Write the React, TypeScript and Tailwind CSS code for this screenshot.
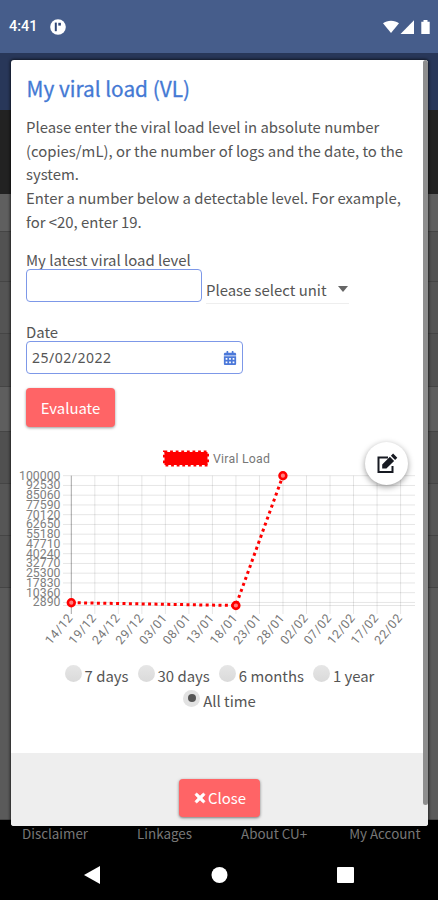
import { FaCalendarAlt, FaTimes } from "react-icons/fa";

const rows = [
  "h-[38px] bg-[#5f5f5f]",
  "h-[50px] bg-[#525252]",
  "h-[52px] bg-[#545454]",
  "h-[53px] bg-[#515151]",
  "h-[45px] bg-[#5e5e5e]",
  "h-[52px] bg-[#505050]",
  "h-[52px] bg-[#565656]",
  "h-[52px] bg-[#535353]",
  "h-[232px] bg-[#5a5a5a]",
];

const intro = [
  "Please enter the viral load level in absolute number",
  "(copies/mL), or the number of logs and the date, to the",
  "system.",
  "Enter a number below a detectable level. For example,",
  "for <20, enter 19.",
];

const ranges = ["7 days", "30 days", "6 months", "1 year"];

const levels = [
  100000, 92530, 85060, 77590, 70120, 62650, 55180, 47710, 40240, 32770, 25300,
  17830, 10360, 2890,
];

const dates = [
  "14/12", "19/12", "24/12", "29/12", "03/01", "08/01", "13/01", "18/01",
  "23/01", "28/01", "02/02", "07/02", "12/02", "17/02", "22/02",
];

const points = [
  [60.3, 162.7],
  [224.9, 165.5],
  [271.9, 35.7],
];

const Chart = () => (
  <svg
    width="411"
    height="212"
    viewBox="0 0 411 212"
    className="block font-[Roboto,sans-serif]"
  >
    <rect x="153.500" y="12" width="43" height="13" fill="#ff0000" stroke="#ff0000" strokeWidth="3" strokeDasharray="2.8 2.8" />
    <text x="202" y="22.5" fontSize="12.3" fill="#777" textLength="57">
      Viral Load
    </text>

    {levels.map((level, i) => (
      <g key={level}>
        <line x1="52" x2="404" y1={35.7 + i * 9.75} y2={35.7 + i * 9.75} stroke="#000" strokeOpacity="0.1" />
        <text x="49.5" y={39.5 + i * 9.75} fontSize="12.3" fill="#808080" textAnchor="end">
          {level}
        </text>
      </g>
    ))}
    <line x1="52" x2="404" y1="165.5" y2="165.5" stroke="#000" strokeOpacity="0.1" />

    {dates.map((date, i) => {
      const x = 60.3 + i * 23.52;
      return (
        <g key={date}>
          <line x1={x} x2={x} y1="35.7" y2="174" stroke="#000" strokeOpacity={i === 0 ? 0.35 : 0.1} />
          <text
            transform={`translate(${x + 2} 178.5) rotate(-50)`}
            fontSize="12.3"
            fill="#777"
            textAnchor="end"
            textLength="35"
          >
            {date}
          </text>
        </g>
      );
    })}

    <polyline
      points={points.map((p) => p.join(",")).join(" ")}
      fill="none"
      stroke="#ff0000"
      strokeWidth="3"
      strokeDasharray="3 3.4"
    />
    {points.map(([x, y]) => (
      <circle key={x} cx={x} cy={y} r="3.4" fill="#ff8080" stroke="#ff0000" strokeWidth="2.6" />
    ))}
  </svg>
);

const StatusBar = () => (
  <div className="flex h-[53px] items-center justify-between bg-[#465d8b] pt-px pr-[7px] pl-[9px] text-white">
    <div className="flex items-center gap-[12px]">
      <span className="pt-px text-[14.5px] leading-none font-medium font-[Roboto,sans-serif]">4:41</span>
      <svg width="16" height="16" viewBox="0 0 16 16">
        <circle cx="8" cy="8" r="7.8" fill="#fff" />
        <path d="M5.800 3.600v8.600" stroke="#2f4677" strokeWidth="2" />
        <path d="M8.300 3.800h2.600v2.800H8.300z" fill="#2f4677" />
      </svg>
    </div>
    <svg width="49" height="16" viewBox="0 0 49 16" fill="#fff">
      <path d="M1 4.2C5 .8 13 .8 17 4.2L9 14z" />
      <path d="M32 1.2V15H18.5z" />
      <path d="M41.5 1h4v1.7h2.2V15h-8.4V2.7h2.2z" />
    </svg>
  </div>
);

const Modal = () => (
  <div className="absolute top-[60px] left-[11px] flex h-[766px] w-[417px] overflow-hidden rounded-[3px] bg-white shadow-[0_0_3px_1px_rgba(0,0,0,0.6)]">
    <div className="flex w-[411px] shrink-0 flex-col">
      <div className="pl-[15px] text-[14.9px]">
        <h4 className="mt-[12px] ml-[0.5px] text-[20.8px] leading-[32px] whitespace-nowrap text-[#4479d4] [-webkit-text-stroke:0.3px_#4479d4]">
          My viral load (VL)
        </h4>
        <div className="mt-[11px]">
          {intro.map((line) => (
            <p key={line} className="text-[14.88px] leading-[23.7px] whitespace-nowrap">
              {line}
            </p>
          ))}
        </div>
        <p className="mt-[17.5px] leading-[18px]">My latest viral load level</p>
        <div className="flex">
          <input className="h-[33px] w-[176px] rounded-[4px] border border-[#7d98e8] outline-none" />
          <div className="ml-[4px] flex h-[35px] w-[143px] items-center justify-between border-b border-[#eee] pt-[8px]">
            <span className="whitespace-nowrap">Please select unit</span>
            <span className="mr-px mb-[3px] border-x-[5px] border-t-[6px] border-x-transparent border-t-[#666]" />
          </div>
        </div>
        <p className="mt-[19px] leading-[18px]">Date</p>
        <div className="flex h-[33px] w-[217px] items-center justify-between rounded-[4px] border border-[#7d98e8] px-[5px]">
          <span className="text-[14px] tracking-[0.5px] font-['Noto_Sans',sans-serif]">25/02/2022</span>
          <FaCalendarAlt size={14} color="#4b78d9" />
        </div>
        <button className="mt-[14px] block h-[39px] w-[89px] rounded-[4px] bg-[#ff6466] pt-px text-white shadow-[0_1px_3px_rgba(0,0,0,0.4)]">
          Evaluate
        </button>
      </div>

      <div className="mt-[13px]">
        <Chart />
      </div>

      <div className="mt-[12px] flex w-[417px] flex-wrap justify-center text-[14.9px] leading-[24.5px]">
        <div className="flex gap-[9px]">
          {ranges.map((range) => (
            <label key={range} className="flex gap-[3px]">
              <span className="mt-px h-[17px] w-[17px] rounded-full bg-linear-to-b from-[#e6e6e6] to-[#dadada]" />
              {range}
            </label>
          ))}
        </div>
        <label className="flex w-full justify-center gap-[3px]">
          <span className="mt-px flex h-[17px] w-[17px] items-center justify-center rounded-full bg-[#e2e2e2]">
            <span className="h-[8px] w-[8px] rounded-full bg-[#555]" />
          </span>
          All time
        </label>
      </div>

      <div className="mt-auto flex h-[73px] w-[417px] justify-center bg-[#eee] pt-[26px]">
        <button className="flex h-[38px] w-[81px] items-center justify-center gap-px rounded-[4px] bg-[#ff6466] text-[14.9px] text-white shadow-[0_1px_3px_rgba(0,0,0,0.5)]">
          <FaTimes size={14} stroke="#fff" strokeWidth={30} />
          Close
        </button>
      </div>
    </div>

    <div className="relative ml-px h-[745px] w-[5px] shrink-0 rounded-sm bg-[#8e8e8e]" />

    <button className="absolute top-[382px] left-[354px] flex h-[43px] w-[43px] items-center justify-center rounded-full bg-white shadow-[0_2px_6px_rgba(0,0,0,0.4)]">
      <svg width="22" height="22" viewBox="0 0 22 22" fill="none">
        <path d="M12 4.500H2.500v14.500h14V13" stroke="#171a22" strokeWidth="2" />
        <path d="M6.200 11.400v4.200h4.200l7.700-7.700-4.200-4.200zM14.900 2.800l4.200 4.200 2.200-2.200-4.200-4.200z" fill="#171a22" />
      </svg>
    </button>
  </div>
);

const App = () => {
  return (
    <div className="relative h-[900px] w-[438px] overflow-hidden bg-black font-['Noto_Sans_CJK_SC',sans-serif] text-[#555]">
      <StatusBar />
      <div className="h-[57px] bg-[#283759]" />
      <div className="h-[84px] bg-[#222]" />
      <div>
        {rows.map((row, i) => (
          <div key={i} className={`border-b border-[#454545] ${row}`} />
        ))}
      </div>
      <div className="flex h-[30px] items-center gap-[49px] pb-[3px] pl-[22px] text-[13.4px] leading-none whitespace-nowrap text-[#777]">
        <span>Disclaimer</span>
        <span>Linkages</span>
        <span>About CU+</span>
        <span className="-ml-[7px]">My Account</span>
      </div>
      <svg width="438" height="50" fill="#fff" className="block">
        <path d="M84 25l16-9v18z" />
        <circle cx="219.500" cy="25" r="8" />
        <rect x="337" y="17" width="17" height="16" rx="1" />
      </svg>
      <Modal />
    </div>
  );
};

export default App;
